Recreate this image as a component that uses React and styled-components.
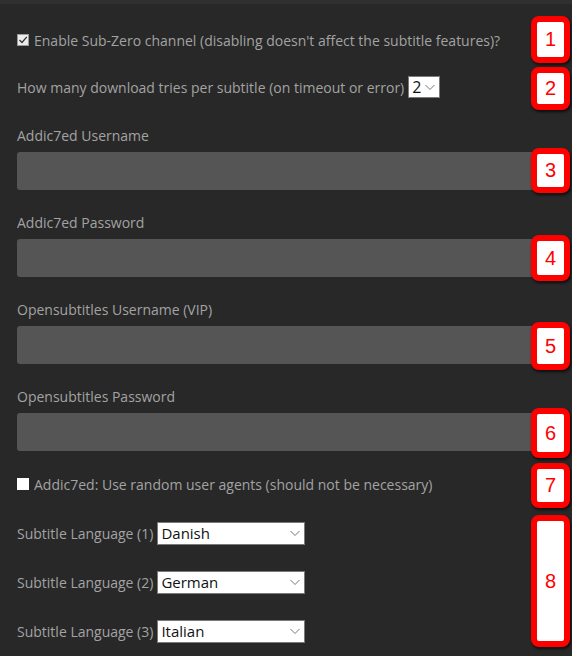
import React from 'react';
import styled, { createGlobalStyle } from 'styled-components';

const GlobalStyle = createGlobalStyle`
  html, body {
    margin: 0;
    padding: 0;
    background: #282828;
  }
  body {
    font-family: "Open Sans", "Noto Sans", sans-serif;
  }
`;

const Page = styled.div`
  position: relative;
  width: 572px;
  height: 656px;
  overflow: hidden;
  background: #282828;
  border-top: 4px solid #303030;
  box-sizing: border-box;
`;

const Form = styled.div`
  display: flex;
  flex-direction: column;
  padding: 26px 12px 0 17px;
  width: 560px;
  box-sizing: border-box;
`;

const CheckRow = styled.label`
  display: flex;
  align-items: center;
  gap: 5px;
  height: 20px;
  color: #a3a3a3;
  font-size: 14px;
  margin-top: ${(p) => p.$top || 0}px;
`;

const Box = styled.span`
  width: 12px;
  height: 12px;
  box-sizing: border-box;
  background: ${(p) => (p.$checked ? '#ececec' : '#ffffff')};
  border: 1px solid ${(p) => (p.$checked ? '#9a9a9a' : '#ffffff')};
  display: flex;
  align-items: center;
  justify-content: center;
`;

const InlineRow = styled.div`
  display: flex;
  align-items: center;
  gap: 4px;
  height: 24px;
  color: #a3a3a3;
  font-size: 14px;
  margin-top: ${(p) => p.$top || 0}px;
`;

const Label = styled.div`
  color: #a3a3a3;
  font-size: 14px;
  line-height: 20px;
  margin-top: ${(p) => p.$top}px;
`;

const Field = styled.div`
  height: 38px;
  margin-top: 6px;
  background: #555555;
  border-radius: 3px;
`;

const Select = styled.div`
  display: flex;
  align-items: center;
  justify-content: space-between;
  box-sizing: border-box;
  width: ${(p) => p.$w}px;
  height: ${(p) => p.$h}px;
  padding: 0 4px 0 3px;
  background: #ffffff;
  border: 1px solid #7a7a7a;
  color: #111;
  font-size: ${(p) => p.$fs}px;
`;

const Badge = styled.div`
  position: absolute;
  left: 531px;
  width: 39px;
  box-sizing: border-box;
  border: 6px solid #ff0000;
  border-radius: 8px;
  background: #ffffff;
  box-shadow: 1px 2px 3px rgba(0, 0, 0, 0.7);
  display: flex;
  align-items: center;
  justify-content: center;
  color: #ff0000;
  font-family: "Liberation Sans", Arial, sans-serif;
  font-size: 20px;
`;

const Chevron = () => (
  <svg width="10" height="7" viewBox="0 0 10 7">
    <path d="M0.5 1 L5 5.5 L9.5 1" fill="none" stroke="#777" strokeWidth="1" />
  </svg>
);

const Check = () => (
  <svg width="10" height="10" viewBox="0 0 10 10">
    <path d="M1.5 5 L4 7.5 L8.8 1.8" fill="none" stroke="#333" strokeWidth="1.3" />
  </svg>
);

const badges = [
  { n: 1, top: 12, h: 47 },
  { n: 2, top: 63, h: 43 },
  { n: 3, top: 144, h: 45 },
  { n: 4, top: 231, h: 46 },
  { n: 5, top: 318, h: 48 },
  { n: 6, top: 404, h: 50 },
  { n: 7, top: 459, h: 45 },
  { n: 8, top: 511, h: 132 },
];

const fields = [
  'Addic7ed Username',
  'Addic7ed Password',
  'Opensubtitles Username (VIP)',
  'Opensubtitles Password',
];

const languages = ['Danish', 'German', 'Italian'];

export default function App() {
  return (
    <>
      <GlobalStyle />
      <Page>
        <Form>
          <CheckRow>
            <Box $checked><Check /></Box>
            Enable Sub-Zero channel (disabling doesn't affect the subtitle features)?
          </CheckRow>
          <InlineRow $top={25}>
            How many download tries per subtitle (on timeout or error)
            <Select $w={32} $h={22} $fs={16}>
              2 <Chevron />
            </Select>
          </InlineRow>
          {fields.map((f, i) => (
            <React.Fragment key={f}>
              <Label $top={i === 0 ? 27 : 23}>{f}</Label>
              <Field />
            </React.Fragment>
          ))}
          <CheckRow $top={23}>
            <Box />
            Addic7ed: Use random user agents (should not be necessary)
          </CheckRow>
          {languages.map((l, i) => (
            <InlineRow key={l} $top={i === 0 ? 27 : 25}>
              Subtitle Language ({i + 1})
              <Select $w={148} $h={23} $fs={15}>
                {l} <Chevron />
              </Select>
            </InlineRow>
          ))}
        </Form>
        {badges.map((b) => (
          <Badge key={b.n} style={{ top: b.top, height: b.h }}>
            {b.n}
          </Badge>
        ))}
      </Page>
    </>
  );
}
